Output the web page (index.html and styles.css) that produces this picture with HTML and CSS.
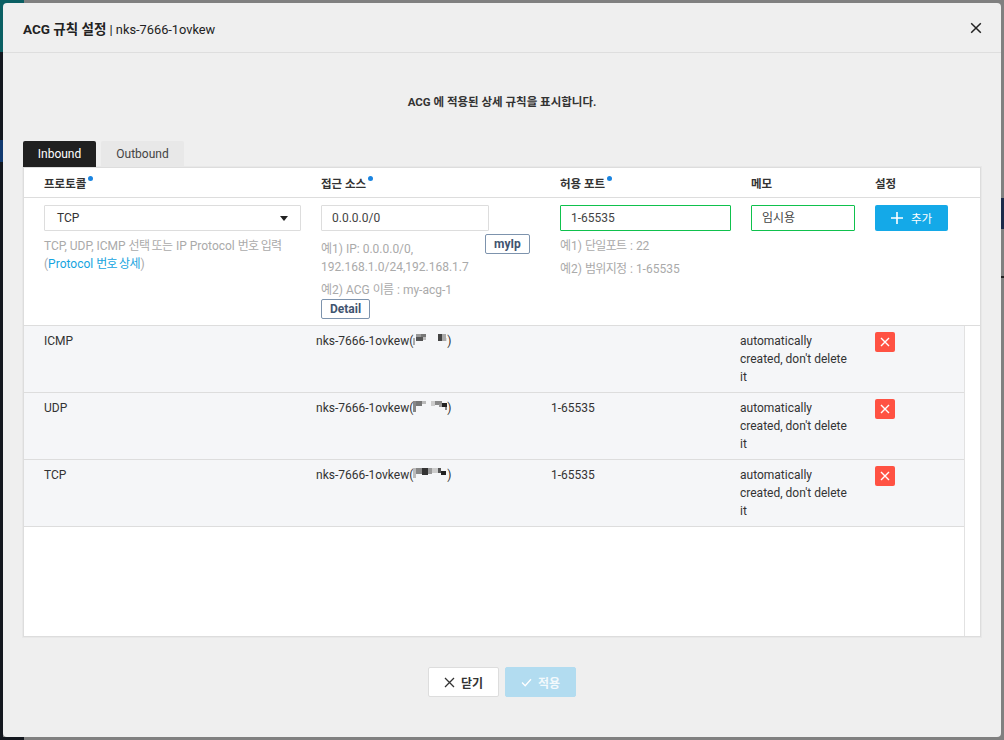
FILE: index.html
```html
<!DOCTYPE html>
<html lang="ko">
<head>
    <meta charset="UTF-8">
    <title>ACG 규칙 설정</title>
    <link rel="stylesheet" href="styles.css">
</head>
<body>

<div class="modal">
    <div class="modal-header">
        <div class="modal-title"><strong>ACG 규칙 설정</strong> | nks-7666-1ovkew</div>
        <button class="modal-close" aria-label="close">
            <svg width="12" height="12" viewBox="0 0 12 12"><path d="M1.2 1.2l9.6 9.6M10.8 1.2l-9.6 9.6" stroke="#222" stroke-width="1.5" fill="none"/></svg>
        </button>
    </div>

    <div class="modal-body">
        <p class="desc">ACG 에 적용된 상세 규칙을 표시합니다.</p>

        <div class="tabs">
            <div class="tab active">Inbound</div>
            <div class="tab">Outbound</div>
        </div>

        <div class="panel">
            <div class="form-grid head-row">
                <div class="label req">프로토콜</div>
                <div class="label req">접근 소스</div>
                <div class="label req">허용 포트</div>
                <div class="label">메모</div>
                <div class="label">설정</div>
            </div>

            <div class="form-grid form-row">
                <div>
                    <div class="field select">TCP<span class="caret"></span></div>
                    <p class="hint hint-proto">TCP, UDP, ICMP <span class="ko">선택 또는</span> IP Protocol <span class="ko">번호 입력</span><br>(<a href="#">Protocol <span class="ko">번호 상세</span></a>)</p>
                </div>
                <div>
                    <div class="field source-field">0.0.0.0/0</div>
                    <div class="source-help">
                        <p class="hint source-hint">예1) IP: 0.0.0.0/0, 192.168.1.0/24,192.168.1.7</p>
                        <button class="btn-small">myIp</button>
                    </div>
                    <p class="hint acg-hint">예2) ACG <span class="ko">이름</span> : my-acg-1</p>
                    <button class="btn-small">Detail</button>
                </div>
                <div>
                    <div class="field valid">1-65535</div>
                    <p class="hint hint-port">예1) <span class="ko">단일포트</span> : 22</p>
                    <p class="hint hint-port">예2) <span class="ko">범위지정</span> : 1-65535</p>
                </div>
                <div>
                    <div class="field valid memo">임시용</div>
                </div>
                <div>
                    <button class="btn-add">
                        <svg width="12" height="12" viewBox="0 0 12 12"><path d="M6 0v12M0 6h12" stroke="#fff" stroke-width="1.6" fill="none"/></svg>
                        추가
                    </button>
                </div>
            </div>

            <div class="list">
                <div class="rows">
                    <div class="row">
                        <div>ICMP</div>
                        <div>nks-7666-1ovkew(<svg class="blur" width="34" height="14" viewBox="0 0 34 14"><rect x="0" y="5" width="2" height="7" fill="#aaa"/><rect x="3" y="1" width="5" height="3" fill="#999"/><rect x="3" y="4" width="7" height="4" fill="#555"/><rect x="8" y="1" width="5" height="3" fill="#777"/><rect x="10" y="4" width="3" height="3" fill="#bbb"/><rect x="25" y="1" width="4" height="7" fill="#444"/><rect x="29" y="1" width="4" height="7" fill="#aaa"/><rect x="33" y="5" width="1" height="3" fill="#ddd"/></svg>)</div>
                        <div></div>
                        <div>automatically created, don't delete it</div>
                        <div><button class="btn-del"><svg width="10" height="10" viewBox="0 0 10 10"><path d="M1 1l8 8M9 1l-8 8" stroke="#fff" stroke-width="1.4" fill="none"/></svg></button></div>
                    </div>
                    <div class="row">
                        <div>UDP</div>
                        <div>nks-7666-1ovkew(<svg class="blur" width="34" height="14" viewBox="0 0 34 14"><rect x="0" y="1" width="3" height="11" fill="#888"/><rect x="3" y="1" width="6" height="5" fill="#777"/><rect x="9" y="1" width="4" height="3" fill="#bbb"/><rect x="18" y="1" width="4" height="5" fill="#ccc"/><rect x="22" y="1" width="7" height="4" fill="#888"/><rect x="26" y="4" width="3" height="3" fill="#999"/><rect x="29" y="3" width="5" height="4" fill="#222"/><rect x="32" y="7" width="2" height="3" fill="#888"/></svg>)</div>
                        <div>1-65535</div>
                        <div>automatically created, don't delete it</div>
                        <div><button class="btn-del"><svg width="10" height="10" viewBox="0 0 10 10"><path d="M1 1l8 8M9 1l-8 8" stroke="#fff" stroke-width="1.4" fill="none"/></svg></button></div>
                    </div>
                    <div class="row">
                        <div>TCP</div>
                        <div>nks-7666-1ovkew(<svg class="blur" width="34" height="14" viewBox="0 0 34 14"><rect x="0" y="1" width="3" height="10" fill="#bbb"/><rect x="3" y="1" width="6" height="6" fill="#888"/><rect x="9" y="1" width="6" height="7" fill="#333"/><rect x="15" y="1" width="4" height="6" fill="#999"/><rect x="19" y="1" width="6" height="5" fill="#ccc"/><rect x="25" y="1" width="3" height="5" fill="#555"/><rect x="28" y="4" width="5" height="4" fill="#222"/></svg>)</div>
                        <div>1-65535</div>
                        <div>automatically created, don't delete it</div>
                        <div><button class="btn-del"><svg width="10" height="10" viewBox="0 0 10 10"><path d="M1 1l8 8M9 1l-8 8" stroke="#fff" stroke-width="1.4" fill="none"/></svg></button></div>
                    </div>
                </div>
                <div class="scroll-track"></div>
            </div>
        </div>

        <div class="actions">
            <button class="btn btn-close">
                <svg width="11" height="11" viewBox="0 0 11 11"><path d="M1 1l9 9M10 1l-9 9" stroke="#333" stroke-width="1.3" fill="none"/></svg>
                닫기
            </button>
            <button class="btn btn-apply">
                <svg width="11" height="9" viewBox="0 0 11 9"><path d="M1 4.5l3.2 3.2L10 1.2" stroke="#fff" stroke-width="1.3" fill="none"/></svg>
                적용
            </button>
        </div>
    </div>
</div>

</body>
</html>
```

FILE: styles.css
```css
/* Basic Reset */
* {
    margin: 0;
    padding: 0;
    box-sizing: border-box;
}

body {
    width: 1004px;
    height: 740px;
    overflow: hidden;
    padding: 3px;
    font-family: Roboto, "Noto Sans CJK KR", sans-serif;
    font-size: 12px;
    color: #333;
    /* dimmed page behind the modal */
    background:
        linear-gradient(#0a5f63, #0a5f63) 0 0 / 24px 52px no-repeat,
        linear-gradient(#123a70, #123a70) 0 140px / 3px 22px no-repeat,
        linear-gradient(#14181f, #14181f) 0 0 / 3px 100% no-repeat,
        linear-gradient(#14181f, #14181f) 0 737px / 24px 3px no-repeat,
        linear-gradient(#1c2a4a, #1c2a4a) 1001px 198px / 3px 31px no-repeat,
        linear-gradient(#222, #222) 1001px 276px / 3px 2px no-repeat,
        #808080;
}

button {
    font-family: inherit;
    cursor: pointer;
}

/* Modal */
.modal {
    width: 998px;
    height: 734px;
    background: #efefef;
    border-radius: 4px;
}

.modal-header {
    height: 50px;
    padding: 0 19px 0 20px;
    display: flex;
    align-items: center;
    justify-content: space-between;
    border-bottom: 1px solid #dedede;
}

.modal-title {
    font-size: 12.8px;
    color: #222;
}

.modal-title strong {
    font-size: 13.5px;
}

.modal-close {
    display: flex;
    border: none;
    background: none;
}

.modal-body {
    padding: 0 20px;
}

.desc {
    height: 88px;
    padding-top: 41px;
    text-align: center;
    font-size: 11.5px;
    line-height: 16px;
    font-weight: 700;
    color: #333;
}

/* Tabs */
.tabs {
    display: flex;
    gap: 5px;
}

.tab {
    width: 83px;
    height: 26px;
    line-height: 26px;
    text-align: center;
    background: #e8e8e8;
    border-radius: 2px 2px 0 0;
    color: #444;
}

.tab.active {
    width: 73px;
    background: #202020;
    color: #fff;
}

/* Panel */
.panel {
    width: 958px;
    height: 470px;
    background: #fff;
    border: 1px solid #ddd;
    box-shadow: 0 0 0 1px #e8e8e8;
    display: flex;
    flex-direction: column;
}

.form-grid {
    display: grid;
    grid-template-columns: 277px 239px 191px 124px 1fr;
    padding-left: 20px;
    border-bottom: 1px solid #ddd;
}

.head-row {
    height: 30px;
    align-items: center;
}

.label {
    font-weight: 700;
    font-size: 11.5px;
    color: #333;
    position: relative;
    width: fit-content;
}

.label.req::after {
    content: "";
    position: absolute;
    right: -7px;
    top: 1px;
    width: 5px;
    height: 5px;
    border-radius: 50%;
    background: #1a84e0;
}

.form-row {
    height: 128px;
    padding-top: 7px;
}

.field {
    height: 26px;
    line-height: 24px;
    padding: 0 10px;
    background: #fff;
    border: 1px solid #ddd;
    border-radius: 1px;
    color: #444;
    width: 100%;
}

.select {
    width: 257px;
    padding-left: 12px;
    position: relative;
    color: #333;
}

.caret {
    position: absolute;
    right: 12px;
    top: 10px;
    border-left: 4px solid transparent;
    border-right: 4px solid transparent;
    border-top: 5px solid #222;
}

.source-field {
    width: 168px;
}

.valid {
    border-color: #0fc14d;
    width: 171px;
}

.valid.memo {
    width: 104px;
}

.hint {
    color: #aaa;
    line-height: 18px;
}

/* hangul runs a little narrower than the latin text */
.ko {
    letter-spacing: -0.7px;
    margin-right: 0.7px;
}

.hint-proto {
    margin-top: 6px;
}

.hint a {
    color: #14a4e0;
    text-decoration: none;
}

.source-help {
    display: flex;
    align-items: flex-start;
    margin-top: 3px;
}

.source-hint {
    width: 164px;
    padding-top: 6px;
}

.acg-hint {
    margin-top: 5px;
}

.hint-port {
    margin-top: 5px;
}

.hint-port:first-of-type {
    margin-top: 6px;
}

.btn-small {
    display: block;
    height: 20px;
    padding: 0 8px;
    background: #fff;
    border: 1px solid #7d93ad;
    border-radius: 2px;
    font-size: 12px;
    font-weight: 700;
    color: #3f5470;
}

.btn-add {
    width: 73px;
    height: 26px;
    display: flex;
    align-items: center;
    justify-content: center;
    gap: 8px;
    background: #14a9e8;
    border: none;
    border-radius: 2px;
    font-size: 11.5px;
    color: #fff;
}

/* Rule list */
.list {
    flex: 1;
    display: flex;
    min-height: 0;
}

.rows {
    flex: 0 0 940px;
}

.row {
    display: grid;
    grid-template-columns: 272px 235px 189px 135px 1fr;
    height: 67px;
    padding: 6px 0 0 20px;
    background: #f5f6f8;
    border-bottom: 1px solid #ddd;
    line-height: 18px;
    color: #333;
}

.row > div:nth-child(4) {
    width: 112px;
}

.blur {
    vertical-align: -2px;
}

.btn-del {
    width: 20px;
    height: 20px;
    display: flex;
    align-items: center;
    justify-content: center;
    background: #ff5243;
    border: none;
    border-radius: 2px;
}

.scroll-track {
    flex: 1;
    border-left: 1px solid #e2e2e2;
    background: #fff;
}

/* Footer buttons */
.actions {
    display: flex;
    justify-content: center;
    gap: 6px;
    margin-top: 30px;
}

.btn {
    width: 71px;
    height: 30px;
    display: flex;
    align-items: center;
    justify-content: center;
    gap: 6px;
    border-radius: 2px;
    font-size: 12px;
    font-weight: 700;
}

.btn-close {
    background: #fff;
    border: 1px solid #ddd;
    color: #333;
}

.btn-apply {
    background: #b2dcf0;
    border: 1px solid #b2dcf0;
    color: #f2f9fc;
}
```
